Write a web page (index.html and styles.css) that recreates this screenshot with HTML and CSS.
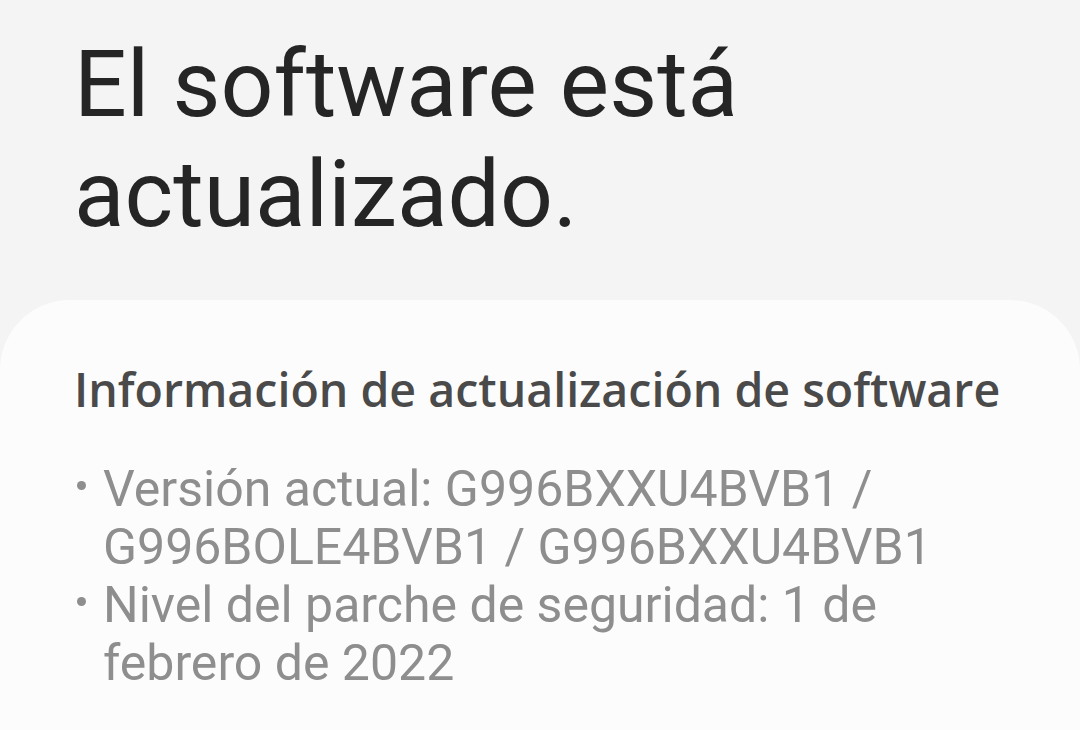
FILE: index.html
```html
<!DOCTYPE html>
<html lang="es">
<head>
<meta charset="utf-8">
<link rel="stylesheet" href="styles.css">
</head>
<body>
<div class="page">
  <h1 class="title">El software está actualizado.</h1>
  <section class="card">
    <h2 class="card-title">Información de actualización de software</h2>
    <ul class="info">
      <li>Versión actual: G996BXXU4BVB1 / G996BOLE4BVB1 / G996BXXU4BVB1</li>
      <li>Nivel del parche de seguridad: 1 de febrero de 2022</li>
    </ul>
  </section>
</div>
</body>
</html>
```
FILE: styles.css
```css
html, body {
  margin: 0;
  padding: 0;
  background: #f4f4f4;
  height: 730px;
  overflow: hidden;
}
.page {
  font-family: Roboto, "Noto Sans", sans-serif;
  display: flex;
  flex-direction: column;
  height: 730px;
}
.title {
  margin: 0;
  padding: 30px 60px 0 74px;
  font-size: 93px;
  font-weight: 400;
  line-height: 110px;
  color: #252525;
  width: 720px;
}
.card {
  flex: 1;
  margin-top: 50px;
  background: #fcfcfc;
  border-radius: 70px 70px 0 0;
  padding: 59px 40px 0 74px;
}
.card-title {
  margin: 0;
  font-family: "Open Sans", Roboto, sans-serif;
  font-size: 46.5px;
  font-weight: 600;
  line-height: 60px;
  color: #4a4a4a;
  white-space: nowrap;
}
.info {
  list-style: none;
  margin: 41px 0 0 0;
  padding: 0;
  width: 870px;
}
.info li {
  position: relative;
  padding-left: 29px;
  font-size: 50px;
  line-height: 58px;
  color: #8e8e8e;
}
.info li::before {
  content: "";
  position: absolute;
  left: 3px;
  top: 21px;
  width: 9px;
  height: 9px;
  border-radius: 50%;
  background: #8e8e8e;
}
```
